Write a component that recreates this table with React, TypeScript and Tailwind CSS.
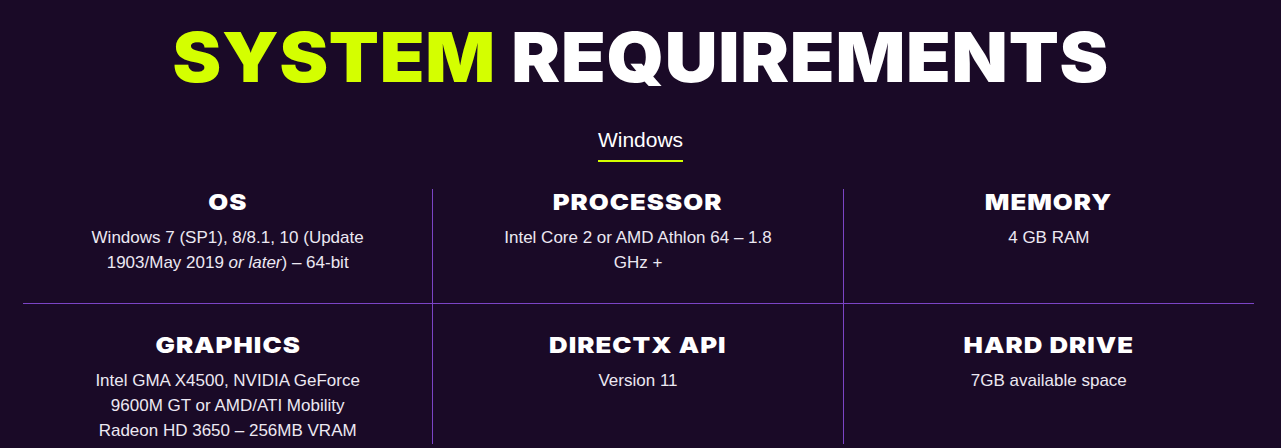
const specs: { title: string; body: React.ReactNode }[] = [
  {
    title: "OS",
    body: (
      <>
        Windows 7 (SP1), 8/8.1, 10 (Update 1903/May 2019 <i>or later</i>) – 64-bit
      </>
    ),
  },
  { title: "PROCESSOR", body: "Intel Core 2 or AMD Athlon 64 – 1.8 GHz +" },
  { title: "MEMORY", body: "4 GB RAM" },
  {
    title: "GRAPHICS",
    body: "Intel GMA X4500, NVIDIA GeForce 9600M GT or AMD/ATI Mobility Radeon HD 3650 – 256MB VRAM",
  },
  { title: "DIRECTX API", body: "Version 11" },
  { title: "HARD DRIVE", body: "7GB available space" },
];

function SpecCell({ title, body, col, row }: { title: string; body: React.ReactNode; col: number; row: number }) {
  return (
    <div
      className={`flex flex-col items-center text-center ${col < 2 ? "border-r border-[#7b44c6]" : ""} ${
        row === 0 ? "border-b border-[#7b44c6] h-[115px]" : "pt-[28px] h-[140px]"
      }`}
    >
      <h3 className="inline-block scale-x-[1.17] text-[22px] leading-[26px] font-black tracking-[0.04em] text-white font-['Inter',sans-serif]">
        {title}
      </h3>
      <p className="mt-[10px] max-w-[292px] text-[17px] leading-[25px] text-[#ece8f2] font-['Liberation_Sans',Arial,sans-serif]">
        {body}
      </p>
    </div>
  );
}

export default function App() {
  return (
    <div className="min-h-screen w-full bg-[#1a0a27] overflow-hidden">
      <div className="flex justify-center pt-[20px]">
        <h1 className="inline-block scale-x-[1.06] text-center text-[69px] leading-[74px] font-black tracking-[0.01em] font-['Inter',sans-serif]">
          <span className="text-[#d4ff00]">SYSTEM</span> <span className="text-white">REQUIREMENTS</span>
        </h1>
      </div>

      <div className="mt-[34px] flex justify-center">
        <div className="border-b-2 border-[#d4ff00] pb-[8px] text-[21px] leading-[24px] text-white font-['Liberation_Sans',Arial,sans-serif]">
          Windows
        </div>
      </div>

      <div className="mx-[23px] mt-[27px] grid w-[1231px] grid-cols-3">
        {specs.map((s, i) => (
          <SpecCell key={s.title} title={s.title} body={s.body} col={i % 3} row={Math.floor(i / 3)} />
        ))}
      </div>
    </div>
  );
}
